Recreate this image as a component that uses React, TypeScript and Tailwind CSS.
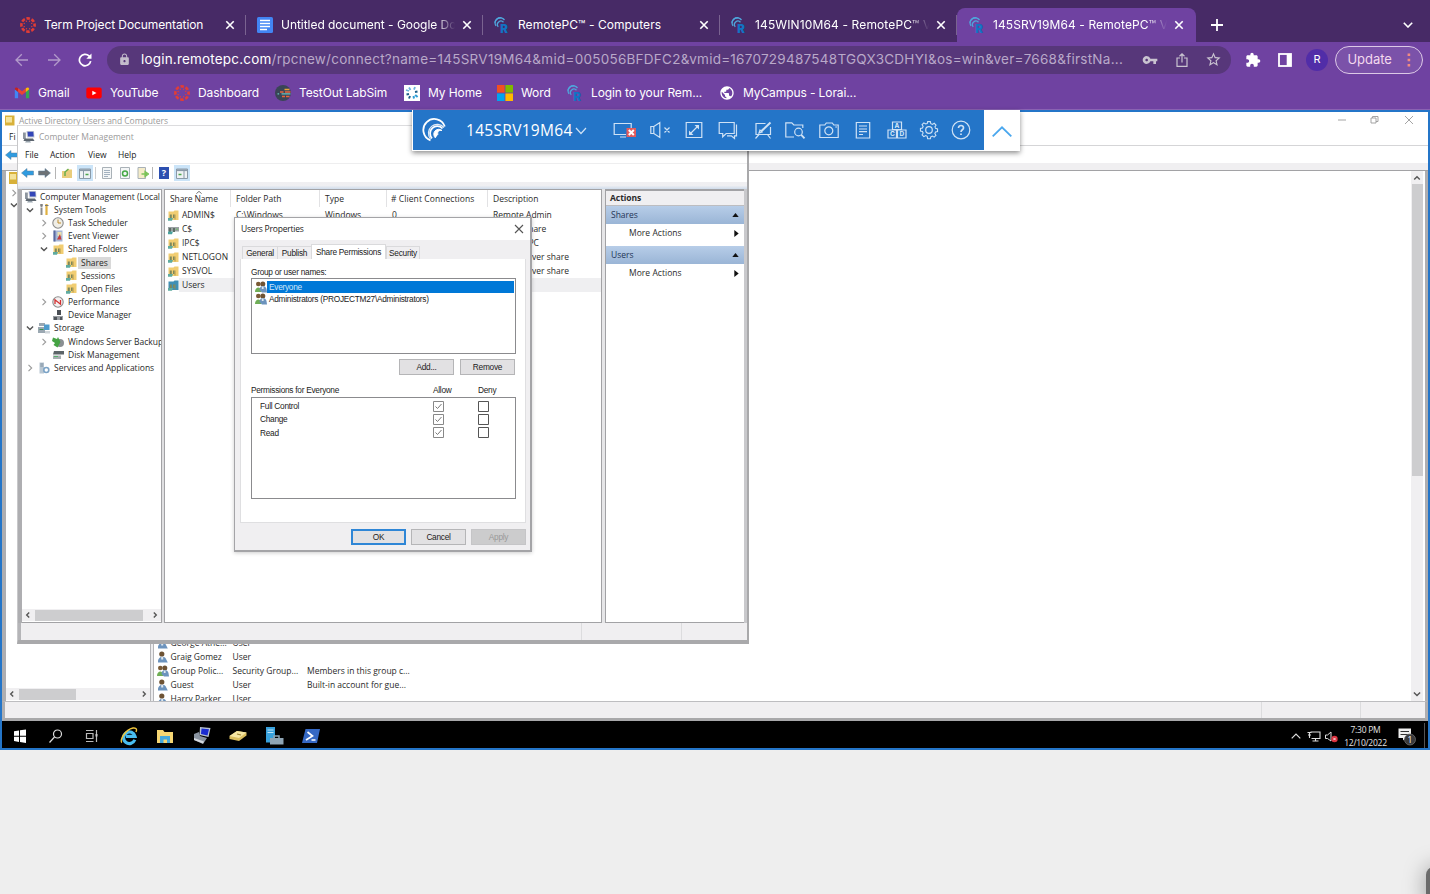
import React from 'react';
import { MdLock, MdVpnKey, MdStarBorder, MdExtension, MdPublic } from 'react-icons/md';

type P = { className?: string };

/* ---------- favicons ---------- */

const CanvasIcon = ({ className = '' }: P) => (
  <svg viewBox="0 0 16 16" className={`h-4 w-4 shrink-0 ${className}`}>
    <circle cx="8" cy="8" r="6.6" fill="none" stroke="#e23d35" strokeWidth="2.6" strokeDasharray="3.5 1.68" strokeDashoffset="1.75" />
    {[0, 45, 90, 135, 180, 225, 270, 315].map((a) => (
      <circle key={a} cx="8" cy="3.9" r="0.7" fill="#e23d35" transform={`rotate(${a + 22} 8 8)`} />
    ))}
  </svg>
);

const DocsIcon = () => (
  <svg viewBox="0 0 16 16" className="h-4 w-4 shrink-0">
    <rect width="16" height="16" rx="1.5" fill="#4285f4" />
    <path d="M3 3.4h10M3 6.4h10M3 9.4h10M3 12.4h7" stroke="#fff" strokeWidth="1.5" />
  </svg>
);

const RpcIcon = () => (
  <svg viewBox="0 0 16 16" className="h-4 w-4 shrink-0 overflow-visible">
    <g fill="none" stroke="#4fa6dc" strokeWidth="1.3">
      <path d="M2 9A5.200 5.200 0 0 1 10.500 3" />
      <path d="M4.300 9.800A3.400 3.400 0 0 1 9.500 5.300" />
      <path d="M.900 5.800A5.500 5.500 0 0 1 7.500.900" />
    </g>
    <text x="6.300" y="16" fontSize="11.500" fontWeight="900" fill="#1273c4" fontFamily="Inter, sans-serif">R</text>
  </svg>
);

const GmailIcon = () => (
  <svg viewBox="0 0 16 16" className="h-4 w-4 shrink-0">
    <path d="M.8 4.500v8.700h3.300V6.500z" fill="#4285f4" />
    <path d="M15.200 4.500v8.700h-3.300V6.500z" fill="#34a853" />
    <path d="M.8 4.300 4.100 7V3.200C2.500 2 .8 2.600.8 4.300" fill="#c5221f" />
    <path d="m4.100 3.200 3.900 3 3.900-3V7L8 10 4.100 7z" fill="#ea4335" />
    <path d="M15.200 4.300 11.900 7V3.200c1.600-1.200 3.300-.6 3.300 1.100" fill="#fbbc04" />
  </svg>
);

const YouTubeIcon = () => (
  <svg viewBox="0 0 16 16" className="h-4 w-4 shrink-0">
    <rect x=".3" y="2.600" width="15.400" height="10.800" rx="1.800" fill="#f00" />
    <path d="m6.300 5.700 4.200 2.300-4.200 2.300z" fill="#fff" />
  </svg>
);

const LabSimIcon = () => (
  <svg viewBox="0 0 16 16" className="h-4 w-4 shrink-0">
    <circle cx="8" cy="8" r="8" fill="#3a4556" />
    <path d="M9.500 4.500h5" stroke="#e8a33a" strokeWidth="1.500" />
    <path d="M5 6.900h3.500M10 6.900h5.500" stroke="#e8643c" strokeWidth="1.500" />
    <path d="M2.500 8.900h1.600M6.500 8.900h9" stroke="#67c3c0" strokeWidth="1.300" />
    <path d="M7 11.500h3M11 11.500h3.500" stroke="#e8643c" strokeWidth="1.500" />
  </svg>
);

const HomeFavIcon = () => (
  <svg viewBox="0 0 16 16" className="h-4 w-4 shrink-0">
    <rect width="16" height="16" fill="#fff" />
    <path d="M5 2.500 6.500 5M11 2l-1 2.600M2 5l3 1" stroke="#69b5dd" strokeWidth="1.800" />
    <path d="M13.500 6.500 11 7M2.500 9.500 5 9M5 13.500 6 11" stroke="#1d5f8a" strokeWidth="2" />
    <path d="m10 13.500-.5-2.500M13.600 12l-2.400-2" stroke="#2d9fd6" strokeWidth="2" />
  </svg>
);

const MsIcon = () => (
  <svg viewBox="0 0 16 16" className="h-4 w-4 shrink-0">
    <path d="M0 0h7.600v7.600H0z" fill="#f25022" />
    <path d="M8.400 0H16v7.600H8.400z" fill="#7fba00" />
    <path d="M0 8.400h7.600V16H0z" fill="#00a4ef" />
    <path d="M8.400 8.400H16V16H8.400z" fill="#ffb900" />
  </svg>
);

/* ---------- browser chrome ---------- */

const Cross = () => (
  <svg viewBox="0 0 10 10" className="h-2.5 w-2.5 shrink-0">
    <path d="m1.300 1.300 7.400 7.400M8.700 1.300 1.300 8.700" stroke="#fff" strokeWidth="1.600" />
  </svg>
);

const Tab = ({ icon, title, cls, active, fade }: { icon: React.ReactNode; title: string; cls: string; active?: boolean; fade?: boolean }) => (
  <div className={`flex h-[34px] items-center ${cls} ${active ? 'w-[239px] rounded-t-lg bg-[#6f42a1]' : 'w-[237px]'}`}>
    {icon}
    <span
      className={`ml-2 w-[174px] whitespace-nowrap text-[12px] text-white ${
        fade ? '[mask-image:linear-gradient(to_right,#000_89%,transparent)]' : ''
      }`}
    >
      {title}
    </span>
    <span className="ml-[7px] flex">
      <Cross />
    </span>
    {!active && <span className="ml-auto h-5 w-px bg-[#7a6390]" />}
  </div>
);

const Bookmark = ({ icon, label, w }: { icon: React.ReactNode; label: string; w: string }) => (
  <div className={`flex items-center gap-2 whitespace-nowrap ${w}`}>
    {icon}
    <span className="text-[12px] tracking-[-0.1px] text-white">{label}</span>
  </div>
);

const Browser = () => (
  <div className="font-['Inter',sans-serif]">
    <div className="flex h-[42px] items-end bg-[#472a66] pl-[9px]">
      <Tab icon={<CanvasIcon />} title="Term Project Documentation" cls="pl-[11px] tracking-[-0.1px]" />
      <Tab icon={<DocsIcon />} title="Untitled document - Google Do" cls="pl-[11px] tracking-[-0.04px]" fade />
      <Tab icon={<RpcIcon />} title="RemotePC™ - Computers" cls="pl-[11px] tracking-[0.07px]" />
      <Tab icon={<RpcIcon />} title="145WIN10M64 - RemotePC™ V" cls="pl-[11px] tracking-[0.13px]" fade />
      <Tab icon={<RpcIcon />} title="145SRV19M64 - RemotePC™ V" cls="pl-3 tracking-[0.1px]" active fade />
      <div className="ml-[15px] flex h-[34px] items-center">
        <svg viewBox="0 0 12 12" className="h-3 w-3">
          <path d="M6 0v12M0 6h12" stroke="#fff" strokeWidth="1.800" />
        </svg>
      </div>
      <div className="mr-[17px] ml-auto flex h-[34px] items-center">
        <svg viewBox="0 0 10 6" className="h-1.5 w-2.5">
          <path d="m.8.8 4.200 4.200L9.200.8" fill="none" stroke="#fff" strokeWidth="1.600" />
        </svg>
      </div>
    </div>
    <div className="h-[68px] border-b border-[#8a63b3] bg-[#6f42a1]">
      <div className="flex h-[35px] items-center pl-[15px]">
        <svg viewBox="0 0 14 14" className="h-3.5 w-3.5">
          <path d="M13 7H1M6.800 1.200 1 7l5.800 5.800" fill="none" stroke="#b29aca" strokeWidth="1.300" />
        </svg>
        <svg viewBox="0 0 14 14" className="ml-[18px] h-3.5 w-3.5">
          <path d="M1 7h12M7.200 1.200 13 7l-5.800 5.800" fill="none" stroke="#b29aca" strokeWidth="1.300" />
        </svg>
        <svg viewBox="0 0 14 14" className="ml-[17px] h-3.5 w-3.5">
          <path d="M12.700 8.200A5.700 5.700 0 1 1 11 2.900L12.500 4.400" fill="none" stroke="#fff" strokeWidth="1.700" />
          <path d="M13.500.6v5.200H8.300z" fill="#fff" />
        </svg>
        <div className="ml-[15px] flex h-7 w-[1124px] items-center rounded-full bg-[#57377a] pr-[9px] pl-[11px]">
          <MdLock className="h-[13px] w-[13px] text-[#c3bccb]" />
          <span className="ml-2.5 w-[985px] whitespace-nowrap text-[13.5px] tracking-[0.26px] text-[#b9a9c9]">
            <span className="tracking-[0.19px] text-white">login.remotepc.com</span>
            /rpcnew/connect?name=145SRV19M64&amp;mid=005056BFDFC2&amp;vmid=1670729487548TGQX3CDHYI&amp;os=win&amp;ver=7668&amp;firstNa...
          </span>
          <MdVpnKey className="ml-auto h-4 w-4 text-[#c9c3d0]" />
          <svg viewBox="0 0 12 14" className="ml-[18px] h-3.5 w-3">
            <path d="M4 5H1v8.300h10V5H8M6 9.500V1M3.500 3.300 6 .9l2.500 2.400" fill="none" stroke="#c9c3d0" strokeWidth="1.200" />
          </svg>
          <MdStarBorder className="ml-[17px] h-[17px] w-[17px] text-[#c9c3d0]" />
        </div>
        <MdExtension className="ml-[14px] h-4 w-4 text-white" />
        <svg viewBox="0 0 14 14" className="ml-[17px] h-3.5 w-3.5">
          <rect x="1" y="1" width="12" height="12" fill="none" stroke="#fff" strokeWidth="1.800" />
          <path d="M8.700 1H13v12H8.700z" fill="#fff" />
        </svg>
        <span className="ml-3.5 flex h-[22px] w-[22px] items-center justify-center rounded-full bg-[#512da8] text-[11px] text-white">R</span>
        <div className="ml-[7px] flex h-7 w-[88px] items-center rounded-full border-[1.5px] border-[#dcc9e6] bg-[#7b52a9] pl-[11.5px]">
          <span className="w-[45px] text-[13px] tracking-[-0.05px] text-[#f3d9ee]">Update</span>
          <svg viewBox="0 0 4 14" className="ml-[14px] h-3.5 w-1">
            <path d="M.6.600h2.600v2.400H.6zM.6 5.800h2.600v2.400H.6zM.6 11h2.600v2.400H.6z" fill="#f28b82" />
          </svg>
        </div>
      </div>
      <div className="flex h-[32px] items-center pl-3.5">
        <Bookmark icon={<GmailIcon />} label="Gmail" w="w-[72px]" />
        <Bookmark icon={<YouTubeIcon />} label="YouTube" w="w-[88px]" />
        <Bookmark icon={<CanvasIcon />} label="Dashboard" w="w-[101px]" />
        <Bookmark icon={<LabSimIcon />} label="TestOut LabSim" w="w-[129px]" />
        <Bookmark icon={<HomeFavIcon />} label="My Home" w="w-[93px]" />
        <Bookmark icon={<MsIcon />} label="Word" w="w-[70px]" />
        <Bookmark icon={<RpcIcon />} label="Login to your Rem..." w="w-[152px]" />
        <Bookmark icon={<MdPublic className="h-4 w-4 shrink-0 rounded-full text-white" />} label="MyCampus - Lorai..." w="w-[150px]" />
      </div>
    </div>
  </div>
);

/* ---------- RemotePC viewer toolbar ---------- */

const Tool = ({ children, ml }: { children: React.ReactNode; ml: string }) => (
  <svg viewBox="0 0 20 20" className={`h-5 w-5 shrink-0 overflow-visible ${ml}`} fill="none" stroke="#cfe2f5" strokeWidth="1.200">
    {children}
  </svg>
);

const ViewerBar = () => (
  <div className="absolute top-[110px] left-[412px] flex h-[41px] w-[608px] border-b border-l border-white bg-white shadow-[0_2px_5px_rgba(0,0,0,0.45)]">
    <div className="flex w-[571px] items-center bg-[#2475c8] pl-[9px]">
      <svg viewBox="0 0 24 24" className="h-6 w-6 shrink-0" fill="none" stroke="#fff">
        <path d="M8.500 22.300A11 11 0 1 1 22.800 8.500" strokeWidth="1.800" />
        <path d="M8.500 20.800A8.800 8.800 0 1 1 22 9.500" strokeWidth="1.200" opacity=".85" />
        <path d="M10 20.300A6.500 6.500 0 1 1 20.500 10.500" strokeWidth="1.800" />
        <path d="M13.500 20a4.800 4.800 0 1 1 6.500-7.500c-3-.5-5 1-4 4" fill="#fff" strokeWidth="1" />
      </svg>
      <span className="ml-[20px] w-[108px] pt-0.5 font-['Open_Sans',sans-serif] text-[15.5px] leading-none tracking-[0.3px] text-white">145SRV19M64</span>
      <svg viewBox="0 0 12 8" className="ml-px mt-0.5 h-2 w-3 shrink-0">
        <path d="m1 1 5 5.500L11 1" fill="none" stroke="#cfe2f5" strokeWidth="1.200" />
      </svg>
      <Tool ml="ml-[27px]">
        <path d="M12 14.500H.2V3.500h17v5M6 17h6" />
        <path d="M12.500 8h9.500v9h-9.500z" fill="#e25a5c" stroke="none" />
        <path d="m14.800 10 5 5m0-5-5 5" stroke="#fff" strokeWidth="2" />
      </Tool>
      <Tool ml="ml-4">
        <path d="M.8 6.500h3v7h-3zM3.800 6.500l6-4v15l-6-4M14.500 7.500l5 5m0-5-5 5" />
      </Tool>
      <Tool ml="ml-3.5">
        <path d="M2.200 2.500h15.600v15H2.200zM5.500 14.500l9-9" />
        <path d="M10.500 5h4.500v4.500zM5 10.500V15h4.500z" fill="#cfe2f5" stroke="none" />
      </Tool>
      <Tool ml="ml-3.5">
        <path d="M1.200 2.500h15v11h-8l-3.500 3.300v-3.300H1.200z" />
        <path d="M18.500 4.500v11.300h-2v2.700l-3.200-2.700H9" />
      </Tool>
      <Tool ml="ml-[15px]">
        <path d="M12.500 3.500H3v11h14.500V7M6 14.500l-3.500 4M14.500 14.500l3 4" />
        <path d="m8 11.500 9.500-9" strokeWidth="2" />
        <path d="m6 13 1-3 2 2z" />
      </Tool>
      <Tool ml="ml-3">
        <path d="M9 17H.8V2.800h6l2 2.200h9v3" />
        <circle cx="13.500" cy="12" r="3.800" />
        <path d="m16.300 14.800 3.200 3.500" strokeWidth="1.800" />
      </Tool>
      <Tool ml="ml-3.5">
        <path d="M.8 5h5l1.500-2h6l1.500 2h4.400v12.500H.8z" />
        <circle cx="9.800" cy="10.800" r="4" />
        <path d="M16.500 7h1.200" strokeWidth="1.600" />
      </Tool>
      <Tool ml="ml-3.5">
        <path d="M3.300 2.500h13.400v15.500H3.300zM6 6h8M6 9h8M6 11.700h8M6 14.500h4" />
      </Tool>
      <Tool ml="ml-3.5">
        <path d="M5.500 2h9v7.500h-9zM1 10h8.500v8H1zM10.500 10H19v8h-8.500z" />
        <g fill="#dcebf8" stroke="none" fontFamily="Inter, sans-serif" fontSize="6.500" fontWeight="700" textAnchor="middle">
          <text x="10" y="8.200">A</text>
          <text x="5.300" y="16.400">C</text>
          <text x="14.800" y="16.400">D</text>
        </g>
      </Tool>
      <Tool ml="ml-3">
        <circle cx="10" cy="10" r="3.300" />
        <path d="M8.500 1.500h3l.5 2.200 1.800.8 2-1.200 2 2-1.200 2 .7 1.700 2.200.5v3l-2.200.5-.8 1.700 1.200 2-2 2-2-1.200-1.700.8-.5 2.200h-3L8 17.800l-1.700-.8-2 1.200-2-2 1.200-2-.8-1.700-2.200-.5V9l2.200-.5.8-1.700-1.200-2 2-2 2 1.200L8 3.700z" transform="translate(1 .3) scale(.9)" />
      </Tool>
      <Tool ml="ml-3">
        <circle cx="10" cy="10" r="8.800" />
        <path d="M7.500 8c0-3.400 5.200-3.200 5 0-.1 1.700-2.500 1.900-2.500 4M10 13.500v1.600" strokeWidth="1.700" />
      </Tool>
    </div>
    <div className="flex flex-1 items-center justify-center">
      <svg viewBox="0 0 20 11" className="mt-[3px] h-[11px] w-5">
        <path d="m.7 10.300 9.300-9 9.300 9" fill="none" stroke="#4aa7ee" strokeWidth="1.800" />
      </svg>
    </div>
  </div>
);

/* ---------- small icons of the remote session ---------- */

const Chev = ({ dir, className = '' }: { dir: 'r' | 'd' | 'l' | 'u'; className?: string }) => (
  <svg viewBox="0 0 8 8" className={`h-2 w-2 shrink-0 ${className}`}>
    <path
      d={{ r: 'm2.500.800 3.200 3.200-3.200 3.200', l: 'M5.200 1.500 2.700 4l2.500 2.500', d: 'm.900 2.500 3.100 3.100 3.100-3.100', u: 'M1.200 5.500 4 2.700l2.800 2.800' }[dir]}
      fill="none"
      stroke={dir === 'r' ? '#9a9a9a' : '#555'}
      strokeWidth={dir === 'r' ? 1.1 : 1.4}
    />
  </svg>
);

const Folder = ({ tint = '#f1cd72' }: { tint?: string }) => (
  <svg viewBox="0 0 11 11" className="h-[11px] w-[11px] shrink-0">
    <path d="M.5 1.500h5l1-1h4v9.500H.5z" fill={tint} />
    <path d="M1.800 4.500h2V8h-2zM5 4.500h1.500V8H5z" fill="#7d875c" />
    <path d="M0 8h5l-1 2.700H0z" fill="#5eaba0" />
    <path d="M7 4.500v5" stroke="#a08a45" strokeWidth=".8" />
  </svg>
);

const Drive = () => (
  <svg viewBox="0 0 11 11" className="h-[11px] w-[11px] shrink-0">
    <path d="M0 3h11v4.500H0z" fill="#9ba1a3" />
    <path d="M1 4h2v4H1zM5 4h2v4H5z" fill="#5d6f65" />
    <path d="M0 7.500h5l-1 2.700H0z" fill="#4ba3a0" />
    <path d="M8 5.200h2" stroke="#6ec26a" />
  </svg>
);

const Computer = () => (
  <svg viewBox="0 0 12 12" className="h-3 w-3 shrink-0">
    <path d="M3.500 0H11l.5 6.500H4z" fill="#c7ccd4" />
    <path d="M4.500.800h5.800l.4 4.700H5z" fill="#3346b8" />
    <path d="M0 1.500h2.800V8H0z" fill="#8d959e" />
    <path d="M1.500 7.500h8.500L11.500 10H.5z" fill="#5d6670" />
    <path d="M3 10h4l1 1.500H2z" fill="#9aa5ae" />
  </svg>
);

const Tools = () => (
  <svg viewBox="0 0 11 11" className="h-[11px] w-[11px] shrink-0">
    <path d="M2.500 0v3.500M2.500 4v7" stroke="#8b8b8b" strokeWidth="2" />
    <path d="M7.500 0v11" stroke="#e0b040" strokeWidth="2.200" />
    <path d="M6 1.500h3.500M1 1h3" stroke="#777" />
  </svg>
);

const Clock = () => (
  <svg viewBox="0 0 12 12" className="h-3 w-3 shrink-0">
    <circle cx="6" cy="6" r="5.200" fill="#f0eee6" stroke="#8c8c8c" strokeWidth="1.100" />
    <path d="M6 2.500V6H9" fill="none" stroke="#c08a28" />
  </svg>
);

const EventLog = () => (
  <svg viewBox="0 0 12 12" className="h-3 w-3 shrink-0">
    <path d="M1.500.500h9v11h-9z" fill="#a7b7d6" />
    <path d="M1.500.500h2v11h-2z" fill="#5a6aa0" />
    <path d="M5.500 2h4v4h-4z" fill="#e8e0b0" />
    <path d="m5 9.500 3-5.500 1.500 5.500z" fill="#c33b3b" />
  </svg>
);

const Perf = () => (
  <svg viewBox="0 0 12 12" className="h-3 w-3 shrink-0">
    <circle cx="6" cy="6" r="5.200" fill="#f4efef" stroke="#8c8c8c" strokeWidth="1.100" />
    <path d="M3 8V3.800L8.500 8.200V4" fill="none" stroke="#d22f2f" strokeWidth="1.300" />
  </svg>
);

const Device = () => (
  <svg viewBox="0 0 12 12" className="h-3 w-3 shrink-0">
    <path d="M5 1h4v5H5z" fill="#4a4f55" />
    <path d="M1 7h10v4H1z" fill="#9a9fa4" />
    <path d="M2 8h3v3H2zM8 8h2v3H8z" fill="#50565c" />
  </svg>
);

const Storage = () => (
  <svg viewBox="0 0 12 12" className="h-3 w-3 shrink-0">
    <path d="M1 1h6v3H1zM0 5h7v6H0z" fill="#9ba8b2" />
    <path d="M6 2.500h5.500V8H6z" fill="#4f9ccc" />
    <path d="M1.500 7.500h4" stroke="#3a8f52" />
    <path d="M7 9h5v2.500H7z" fill="#cfd5da" />
  </svg>
);

const Backup = () => (
  <svg viewBox="0 0 12 12" className="h-3 w-3 shrink-0">
    <circle cx="8" cy="7" r="4" fill="#8a8f93" />
    <path d="M1 1.500 5 3l1-2 2.500 5-3 5.500L1.500 9 3 7 0 5z" fill="#45a343" />
  </svg>
);

const Disk = () => (
  <svg viewBox="0 0 12 12" className="h-3 w-3 shrink-0">
    <path d="M2 2h10v3.500H1z" fill="#5c6468" />
    <path d="M1 6.500h8V10H1z" fill="#a7aeb2" />
    <path d="M2 7.500h4" stroke="#55b06a" />
  </svg>
);

const Services = () => (
  <svg viewBox="0 0 12 12" className="h-3 w-3 shrink-0">
    <path d="M1.500.500h4.500v11H1.500z" fill="#b9c7d3" />
    <path d="M2.300 2h3M2.300 4h3" stroke="#7a8c9c" />
    <circle cx="8.300" cy="8" r="2.500" fill="none" stroke="#7ba3c6" strokeWidth="1.600" />
  </svg>
);

const Person = ({ group }: { group?: boolean }) => (
  <svg viewBox="0 0 12 12" className="h-3 w-3 shrink-0">
    {group ? (
      <>
        <circle cx="3.300" cy="3" r="2.300" fill="#7a5a35" />
        <path d="M0 11c0-6 6.500-6 6.500 0z" fill="#6fae56" />
        <circle cx="7.800" cy="3" r="2.500" fill="#6e5334" />
        <path d="M4.500 9c0-5 6-5 7-1l.5 3.500H7z" fill="#6c93bd" />
        <path d="M6.800 5.500h1.800V8H6.800z" fill="#dfe8f0" />
      </>
    ) : (
      <>
        <circle cx="4.800" cy="3" r="2.600" fill="#6e5334" />
        <path d="M1 11c0-6.500 7-6 8-3l1.800 3.500H1z" fill="#6c93bd" />
        <path d="M4.200 6h2v2.500h-2z" fill="#dfe8f0" />
      </>
    )}
  </svg>
);

const ArrowIcon = ({ flip, fill }: { flip?: boolean; fill: string }) => (
  <svg viewBox="0 0 13 10" className={`h-2.5 w-[13px] shrink-0 ${flip ? '-scale-x-100' : ''}`}>
    <path d="M.5 5 6 .500V3h6.500v4H6v2.500z" fill={fill} stroke="#5a7f98" strokeWidth=".5" />
  </svg>
);

const PanelIcon = ({ right }: { right?: boolean }) => (
  <svg viewBox="0 0 12 11" className="h-[11px] w-3 shrink-0">
    <path d="M.5 1h11v9.500H.5z" fill="#eef2f4" stroke="#8a9aa8" />
    <path d="M.5 2.200h11" stroke="#8a9aa8" strokeWidth="1.800" />
    <path d={right ? 'M8 3v7' : 'M4.500 3v7'} stroke="#8a9aa8" />
    <path d={right ? 'M2.500 6.500h3' : 'M6.500 6.500h3'} stroke="#4ca64c" strokeWidth="1.500" />
  </svg>
);

const PageIcon = ({ kind }: { kind: 'list' | 'refresh' | 'export' | 'up' }) => (
  <svg viewBox="0 0 12 12" className="h-3 w-3 shrink-0">
    {kind === 'up' ? (
      <>
        <path d="M1 4h4l1-1.500h5V11H1z" fill="#e9cd7c" />
        <path d="M4 9V5l3.500-3" fill="none" stroke="#6aae4c" strokeWidth="1.500" />
      </>
    ) : (
      <>
        <path d={kind === 'export' ? 'M1 .500h7.500v11H1z' : 'M1.500.500h9v11h-9z'} fill={kind === 'export' ? '#f5ecc9' : '#f4f6f7'} stroke="#a9b1b7" />
        {kind === 'list' && <path d="M3 3.500h6M3 5.500h6M3 7.500h6M3 9.500h4" stroke="#8ea0b0" strokeWidth=".8" />}
        {kind === 'refresh' && <circle cx="6" cy="6.500" r="2.500" fill="none" stroke="#46a846" strokeWidth="1.500" />}
        {kind === 'export' && <path d="M4.500 7H9M8 4.500 11.500 7 8 9.500z" fill="#7cc35a" stroke="#7cc35a" strokeWidth="1.300" />}
      </>
    )}
  </svg>
);

const HScroll = ({ thumb }: { thumb: string }) => (
  <div className="mb-px flex h-3 items-center bg-[#f0eff1] px-0.5">
    <Chev dir="l" />
    <div className={`ml-[3px] h-[11px] bg-[#cdcdcf] ${thumb}`} />
    <svg viewBox="0 0 8 8" className="ml-auto h-2 w-2">
      <path d="M2.800 1.500 5.300 4 2.800 6.500" fill="none" stroke="#555" strokeWidth="1.400" />
    </svg>
  </div>
);

/* ---------- Active Directory window ---------- */

const adRows: [boolean, string, string, string][] = [
  [false, 'George Athe...', 'User', ''],
  [false, 'Graig Gomez', 'User', ''],
  [true, 'Group Polic...', 'Security Group...', 'Members in this group c...'],
  [false, 'Guest', 'User', 'Built-in account for gue...'],
  [false, 'Harry Parker', 'User', ''],
];

const DirectoryWindow = () => (
  <div className="flex h-[609px] flex-col bg-white">
    <div className="flex h-[18px] items-center pl-[3px]">
      <svg viewBox="0 0 10 11" className="mb-0.5 h-[11px] w-2.5">
        <path d="M0 .500h9.500v10H0z" fill="#d8b13a" />
        <path d="M1 2h6v5.500H1z" fill="#f3e29b" />
      </svg>
      <span className="ml-1 tracking-[-0.05px] text-[#9b9b9b]">Active Directory Users and Computers</span>
      <svg viewBox="0 0 80 10" className="mr-[14px] mb-[3px] ml-auto h-2.5 w-20" fill="none" stroke="#9a9a9a" strokeWidth=".9">
        <path d="M4 5h8M37 3h5v5h-5zM38.500 3V1.500H44V6.500h-2M71 1l8 8m0-8-8 8" />
      </svg>
    </div>
    <div className="flex h-4 items-center border-b border-[#d5d5d7] pb-0.5 pl-[7px] text-[#222]">Fi</div>
    <div className="flex h-[17px] items-center pl-[3px]">
      <ArrowIcon fill="#2f9be0" />
    </div>
    <div className="h-2 border-b border-[#a2a2a5] bg-[#f0eff1]" />
    <div className="flex h-[530px] border-r-[3px] border-l-4 border-[#aeaeb1]">
      <div className="flex w-[144px] flex-col justify-between">
        <div className="flex flex-col pt-px pl-px">
          <svg viewBox="0 0 10 12" className="ml-0.5 h-3 w-2.5">
            <path d="M0 0h9.500v12H0z" fill="#d8b13a" />
            <path d="M1 2h6v5.500H1z" fill="#f3e29b" />
          </svg>
          <Chev dir="r" className="mt-[5px] ml-[3px]" />
          <Chev dir="d" className="mt-[4px] ml-[3px]" />
        </div>
        <HScroll thumb="w-[57px]" />
      </div>
      <div className="w-1 border-x border-[#b5b5b8] bg-[#ececee]" />
      <div className="flex h-full flex-1 flex-col justify-end overflow-hidden">
        <div className="mb-[-5px]">
          {adRows.map(([group, name, type, desc]) => (
            <div key={name} className="flex h-3.5 items-center pl-[3px]">
              <Person group={group} />
              <span className="ml-[1.5px] w-[62px]">{name}</span>
              <span className="w-[74.5px]">{type}</span>
              <span>{desc}</span>
            </div>
          ))}
        </div>
      </div>
      <div className="mr-0.5 flex w-3 flex-col items-center bg-[#f0eff1] pt-[3px] pb-[3px]">
        <Chev dir="u" />
        <div className="mt-[2px] h-[292px] w-[11px] bg-[#cdcdcf]" />
        <Chev dir="d" className="mt-auto" />
      </div>
    </div>
    <div className="flex h-[20px] justify-end border-x-[3px] border-t border-b-[3px] border-t-[#bdbdc0] border-r-[#aeaeb1] border-b-[#a8a8aa] border-l-[#aeaeb1] bg-[#f0eff1]">
      <div className="w-[99px] border-l border-[#dcdcde]" />
      <div className="w-[65px] border-l border-[#dcdcde]" />
    </div>
  </div>
);

/* ---------- Computer Management window ---------- */

type Node = { lvl: 0 | 1 | 2 | 3; icon: React.ReactNode; label: string; chev?: 'r' | 'd'; sel?: boolean };
const tree: Node[] = [
  { lvl: 0, icon: <Computer />, label: 'Computer Management (Local' },
  { lvl: 1, icon: <Tools />, label: 'System Tools', chev: 'd' },
  { lvl: 2, icon: <Clock />, label: 'Task Scheduler', chev: 'r' },
  { lvl: 2, icon: <EventLog />, label: 'Event Viewer', chev: 'r' },
  { lvl: 2, icon: <Folder />, label: 'Shared Folders', chev: 'd' },
  { lvl: 3, icon: <Folder />, label: 'Shares', sel: true },
  { lvl: 3, icon: <Folder />, label: 'Sessions' },
  { lvl: 3, icon: <Folder />, label: 'Open Files' },
  { lvl: 2, icon: <Perf />, label: 'Performance', chev: 'r' },
  { lvl: 2, icon: <Device />, label: 'Device Manager' },
  { lvl: 1, icon: <Storage />, label: 'Storage', chev: 'd' },
  { lvl: 2, icon: <Backup />, label: 'Windows Server Backup', chev: 'r' },
  { lvl: 2, icon: <Disk />, label: 'Disk Management' },
  { lvl: 1, icon: <Services />, label: 'Services and Applications', chev: 'r' },
];
const indent = { 0: 'pl-0.5', 1: 'pl-1', 2: 'pl-[18px]', 3: 'pl-[31px]' };

const TreeRow = ({ n }: { n: Node }) => (
  <div className={`flex h-[13.2px] items-center whitespace-nowrap ${indent[n.lvl]}`}>
    {n.lvl > 0 && (n.chev ? <Chev dir={n.chev} /> : <span className="w-2" />)}
    <span className={`flex w-3 shrink-0 justify-center ${n.lvl === 0 ? 'ml-px' : 'ml-1'}`}>{n.icon}</span>
    <span className={n.sel ? 'ml-px bg-[#d9d9d9] px-[3px]' : n.lvl === 0 ? 'ml-[3px]' : 'ml-1'}>{n.label}</span>
  </div>
);

const shares: [React.ReactNode, string, string, string, string, string][] = [
  [<Folder />, 'ADMIN$', 'C:\\Windows', 'Windows', '0', 'Remote Admin'],
  [<Drive />, 'C$', '', '', '', 'Default share'],
  [<Folder />, 'IPC$', '', '', '', 'Remote IPC'],
  [<Folder />, 'NETLOGON', '', '', '', 'Logon server share'],
  [<Folder />, 'SYSVOL', '', '', '', 'Logon server share'],
  [<Folder tint="#3f8fb5" />, 'Users', '', '', '', ''],
];

const ActionGroup = ({ title }: { title: string }) => (
  <>
    <div className="flex h-[18px] items-center bg-linear-to-b from-[#b7cde8] to-[#9ab5d6] pr-[5px] pl-[5px] text-[#1f3557]">
      {title}
      <svg viewBox="0 0 8 5" className="ml-auto h-1 w-[7px]">
        <path d="m0 5 4-5 4 5z" fill="#111" />
      </svg>
    </div>
    <div className="mb-1 flex h-[18px] items-center pr-[5px] pl-[23px] tracking-[0.04px]">
      More Actions
      <svg viewBox="0 0 5 8" className="ml-auto h-[7px] w-[5px]">
        <path d="m0 0 5 4-5 4z" fill="#111" />
      </svg>
    </div>
  </>
);

const ManagementWindow = () => (
  <div className="absolute top-[125px] left-[17px] flex h-[519px] w-[732px] flex-col border border-t-[#dcdcde] border-r-2 border-b-4 border-[#a9a9ab] border-l-[#c8c8ca] bg-white">
    <div className="flex h-[21px] items-center pl-[5px] text-[#9b9b9b]">
      <Computer />
      <span className="ml-1">Computer Management</span>
    </div>
    <div className="flex h-[17px] items-center border-b border-[#eeeeef] pl-[7px] text-[#222]">
      <span className="w-[25px]">File</span>
      <span className="w-[38px]">Action</span>
      <span className="w-[30px]">View</span>
      <span>Help</span>
    </div>
    <div className="flex h-[18px] items-center pl-[3px]">
      <ArrowIcon fill="#2f9be0" />
      <span className="ml-1 flex">
        <ArrowIcon fill="#6d7276" flip />
      </span>
      <span className="ml-[4px] h-3 w-px bg-[#b5b5b5]" />
      <span className="ml-[5px] flex">
        <PageIcon kind="up" />
      </span>
      <span className="ml-1 flex h-4 w-4 items-center justify-center bg-[#cbe4f8]">
        <PanelIcon />
      </span>
      <span className="ml-0.5 h-3 w-px bg-[#cfcfcf]" />
      <span className="ml-[5px] flex gap-[6px]">
        <PageIcon kind="list" />
        <PageIcon kind="refresh" />
        <PageIcon kind="export" />
      </span>
      <span className="ml-[3px] h-3 w-px bg-[#b5b5b5]" />
      <span className="ml-1.5 flex h-3 w-2.5 items-center justify-center bg-[#2c4fb0] text-[9px] font-bold text-white">?</span>
      <span className="ml-[5px] flex h-4 w-4 items-center justify-center bg-[#cbe4f8]">
        <PanelIcon right />
      </span>
    </div>
    <div className="h-[7px] bg-linear-to-b from-[#f0eff1] via-[#efeff2] to-[#cfdceb]" />
    <div className="flex h-[434px] border-l-4 border-[#aeaeb1]">
      <div className="flex w-[139px] flex-col justify-between overflow-hidden border-t border-b border-[#a2a2a5]">
        <div>
          {tree.map((n) => (
            <TreeRow key={n.label} n={n} />
          ))}
        </div>
        <HScroll thumb="w-[108px]" />
      </div>
      <div className="w-1 border-x border-[#a2a2a5] bg-[#dfdfe1]" />
      <div className="w-[436px] border-t border-b border-[#a2a2a5]">
        <div className="flex h-[18px] items-center pb-px">
          <div className="flex h-full w-[66px] items-center border-r border-[#e2e2e4] pl-[5px] tracking-[-0.1px]">
            Share Name
            <svg viewBox="0 0 8 4" className="mb-[13px] -ml-[22px] h-[3px] w-1.5">
              <path d="m.5 3.500 3.500-3 3.500 3" fill="none" stroke="#666" strokeWidth="1.200" />
            </svg>
          </div>
          <div className="flex h-full w-[89px] items-center border-r border-[#e2e2e4] pl-[5px]">Folder Path</div>
          <div className="flex h-full w-[67px] items-center border-r border-[#e2e2e4] pl-[5px]">Type</div>
          <div className="flex h-full w-[101px] items-center border-r border-[#e2e2e4] pl-1 tracking-[0.08px]"># Client Connections</div>
          <div className="pl-[5px]">Description</div>
        </div>
        <div>
          {shares.map(([icon, name, path, type, n, desc]) => (
            <div key={name} className="flex h-3.5 items-center pl-[3px]">
              {icon}
              <div className={`flex h-full flex-1 items-center pl-[3px] ${name === 'Users' ? 'bg-[#efeff1]' : ''}`}>
                <span className="w-[54px]">{name}</span>
                <span className="w-[89px]">{path}</span>
                <span className="w-[67px]">{type}</span>
                <span className="w-[101px]">{n}</span>
                <span>{desc}</span>
              </div>
            </div>
          ))}
        </div>
      </div>
      <div className="w-[5px] border-x border-[#a2a2a5] bg-[#e6e6e8]" />
      <div className="w-[138px] border-t-2 border-b border-[#a2a2a5]">
        <div className="flex h-[15px] items-center border-b border-[#bdbdc0] bg-[#f0eff1] pl-1 font-bold tracking-[-0.05px]">Actions</div>
        <ActionGroup title="Shares" />
        <ActionGroup title="Users" />
      </div>
      <div className="flex-1 bg-[#c9c9cc]" />
    </div>
    <div className="flex flex-1 justify-end border-l-[3px] border-[#b5b5b8] bg-[#f0eff1]">
      <div className="w-[100px] border-l border-[#dcdcde]" />
      <div className="w-[66px] border-l border-[#dcdcde]" />
    </div>
  </div>
);

/* ---------- Users Properties dialog ---------- */

const Btn = ({ label, cls }: { label: string; cls: string }) => (
  <div className={`flex h-4 items-center justify-center ${cls}`}>{label}</div>
);

const Box = ({ checked }: { checked?: boolean }) => (
  <svg viewBox="0 0 11 11" className="h-[11px] w-[11px]" fill="none">
    <path d="M.5.500h10v10H.5z" fill="#fff" stroke={checked ? '#888' : '#555'} />
    {checked && <path d="m2.500 5.500 2 2 4-4.500" stroke="#777" />}
  </svg>
);

const PropertiesDialog = () => (
  <div className="absolute top-[217px] left-[234px] flex h-[335px] w-[298px] flex-col border border-r-2 border-b-2 border-[#a4a4a7] bg-[#f0eff1] text-[8.3px] text-[#222] shadow-[0_1px_4px_rgba(0,0,0,0.2)] font-['Liberation_Sans',sans-serif] tracking-[-0.27px]">
    <div className="flex h-[22px] items-center justify-between bg-white pr-1.5 pl-1.5 font-['Open_Sans',sans-serif] text-[8.5px] tracking-[-0.2px]">
      Users Properties
      <svg viewBox="0 0 10 10" className="h-2.5 w-2.5">
        <path d="m1 1 8 8m0-8L1 9" stroke="#555" strokeWidth="1.100" />
      </svg>
    </div>
    <div className="flex h-[19px] items-end pt-1 pl-[7px]">
      <div className="flex h-[13px] w-[36px] items-center justify-center border border-b-0 border-[#dadadc]">General</div>
      <div className="flex h-[13px] w-[33px] items-center justify-center border-t border-[#dadadc]">Publish</div>
      <div className="flex h-[15px] w-[75px] items-center justify-center border border-b-0 border-[#dadadc] bg-white">Share Permissions</div>
      <div className="flex h-[13px] w-[34px] items-center justify-center border border-b-0 border-[#dadadc]">Security</div>
    </div>
    <div className="mr-[4px] ml-[5px] flex h-[264px] flex-col border border-t-0 border-[#dfdfe1] bg-white pl-[10px]">
      <div className="flex h-[19px] items-center pt-[6px]">Group or user names:</div>
      <div className="h-[76px] w-[265px] border border-[#8b8b8e] pt-px pr-px pl-[3px]">
        <div className="flex h-[13px] items-center">
          <Person group />
          <span className="flex h-3 flex-1 items-center bg-[#0078d7] pl-0.5 text-[#cfe6fa]">Everyone</span>
        </div>
        <div className="flex h-3 items-center">
          <Person group />
          <span className="pl-0.5">Administrators (PROJECTM27\Administrators)</span>
        </div>
      </div>
      <div className="mt-[5px] flex w-[264px] justify-end gap-1.5">
        <Btn label="Add..." cls="w-[55px] border border-[#b5b5b7] bg-[#e2e1e3]" />
        <Btn label="Remove" cls="w-[55px] border border-[#b5b5b7] bg-[#e2e1e3]" />
      </div>
      <div className="mt-[8px] flex h-[14px] items-center">
        <span className="w-[182px]">Permissions for Everyone</span>
        <span className="w-[45px]">Allow</span>
        <span>Deny</span>
      </div>
      <div className="h-[102px] w-[265px] border border-[#8b8b8e] pt-[1.5px] pl-2">
        {['Full Control', 'Change', 'Read'].map((p) => (
          <div key={p} className="flex h-[13.3px] items-center">
            <span className="w-[173px]">{p}</span>
            <Box checked />
            <span className="w-[34px]" />
            <Box />
          </div>
        ))}
      </div>
    </div>
    <div className="flex flex-1 items-center justify-end gap-[5px] pr-1">
      <Btn label="OK" cls="w-[55px] border-2 border-[#2f86d6] bg-[#e2e1e3]" />
      <Btn label="Cancel" cls="w-[55px] border border-[#b5b5b7] bg-[#e2e1e3]" />
      <Btn label="Apply" cls="w-[55px] border border-[#c5c5c7] bg-[#cccccd] text-[#999]" />
    </div>
  </div>
);

/* ---------- taskbar ---------- */

const Task = ({ children }: { children: React.ReactNode }) => (
  <svg viewBox="0 0 20 20" className="h-5 w-5 shrink-0" fill="none">
    {children}
  </svg>
);

const Taskbar = () => (
  <div className="flex h-[27px] items-center bg-black pt-0.5 pl-[7px] font-['Open_Sans',sans-serif]">
    <div className="flex items-center gap-[16.5px]">
      <Task>
        <path d="M5 5.300 10 4.500v5.200H5zM11 4.300 17 3.500v6.200h-6zM5 10.700h5v5.200L5 15.100zM11 10.700h6v6.200l-6-.8z" fill="#fff" />
      </Task>
      <Task>
        <circle cx="11.500" cy="8" r="4" stroke="#ddd" strokeWidth="1.200" />
        <path d="m8.500 11-5 5.500" stroke="#ddd" strokeWidth="1.200" />
      </Task>
      <Task>
        <path d="M4.500 7.500h6.500v5H4.500zM4 4.500h7.500M4 15.500h7.500M14.500 4v12" stroke="#bbb" strokeWidth="1.200" />
        <path d="M13.500 8h2v2.500h-2z" fill="#ccc" />
      </Task>
      <Task>
        <path d="M15.800 13.800A5.800 5.800 0 1 1 16 10.300H7" stroke="#49bdf0" strokeWidth="3.200" />
        <path d="M3 16.500C0 15 6 3.500 14 2c4-.500 4 2 3 4" stroke="#f0c53c" strokeWidth="1.400" />
      </Task>
      <Task>
        <path d="M2 4h6l1.500 2H18v11H2z" fill="#f6d673" />
        <path d="M5 10h10v7h-3v-3.500H8.500V17H5z" fill="#46a9dd" />
      </Task>
      <Task>
        <path d="m8 1 10.500 1-2 9-9-2z" fill="#b7c2d2" />
        <path d="m9.500 2.500 7.500.7-1.500 6.300-6.500-1.500z" fill="#1a2bd0" />
        <path d="m2 8 5-2 1 4 7 2-4 6-9-4z" fill="#8a94a1" />
        <path d="m2 12 10 3.500-1 2L2 14z" fill="#d5dae0" />
      </Task>
      <Task>
        <path d="m1.500 10 7.500-5 9.500 1.500v3L11 15l-9.500-2z" fill="#d9bd5e" />
        <path d="m1.500 10 7.500-5 9.500 1.500L11 12z" fill="#f5e6a3" />
        <path d="m9 8 4 1" stroke="#99802f" strokeWidth="1.200" />
      </Task>
      <Task>
        <path d="M1 1h9v15.500H1z" fill="#38a1dc" />
        <path d="M2.500 4h6M2.500 6.500h6" stroke="#bfe3f7" />
        <path d="M5 12h13.500v6.500H5z" fill="#8fa5b5" />
        <path d="M9 12v-2h5v2" stroke="#8fa5b5" strokeWidth="1.500" />
      </Task>
      <Task>
        <path d="M4.500 3H19l-3 14H1z" fill="#3568c4" />
        <path d="m6.500 6 5 4-6.500 4M10.500 14h4" stroke="#fff" strokeWidth="1.700" />
      </Task>
    </div>
    <div className="ml-auto flex items-center">
      <svg viewBox="0 0 10 6" className="h-1.5 w-2.5">
        <path d="m.7 5.300L5 1l4.300 4.300" fill="none" stroke="#ddd" strokeWidth="1.200" />
      </svg>
      <svg viewBox="0 0 14 12" className="ml-[6px] h-3 w-3.5" fill="none" stroke="#ddd">
        <path d="M3.500 2h9.500v6.500H4.500M8.500 8.500v2.500M5.500 11h6M2.500 2v6M.5 2.500h4M1 5h3" strokeWidth="1.100" />
      </svg>
      <svg viewBox="0 0 13 12" className="ml-[4px] mt-0.5 h-3 w-[13px]">
        <path d="M.5 4h2L6 1v9L2.500 7.500h-2z" fill="none" stroke="#ddd" />
        <circle cx="9.500" cy="8" r="3.200" fill="#d92f3c" />
        <path d="m8.300 6.800 2.400 2.400m0-2.400L8.300 9.200" stroke="#fff" strokeWidth=".8" />
      </svg>
      <div className="ml-[5px] flex w-[45px] flex-col items-center text-[8.5px] leading-[13px] tracking-[-0.25px] whitespace-nowrap text-[#e4e4e4]">
        <span>7:30 PM</span>
        <span>12/10/2022</span>
      </div>
      <svg viewBox="0 0 20 20" className="ml-[9px] h-5 w-5">
        <path d="M1.500 2.500H14V12H8.500L6 14.500V12H1.500z" fill="#f0f0f0" />
        <path d="M3.500 5.500H12M3.500 8.500H12" stroke="#333" />
        <circle cx="13" cy="13.500" r="5.500" fill="#3a3a3c" stroke="#777" strokeWidth=".7" />
        <text x="13" y="16.500" textAnchor="middle" fontSize="8.500" fill="#fff">1</text>
      </svg>
      <span className="ml-[7px] h-[25px] w-1 border-l border-[#555]" />
    </div>
  </div>
);

export default function App() {
  return (
    <div className="relative h-[894px] w-[1430px] overflow-hidden bg-[#eeeeee]">
      <Browser />
      <div className="h-[640px] border-2 border-[#2475c8] font-['Open_Sans',sans-serif] text-[8.5px] leading-[12px] whitespace-nowrap text-[#2a2a2a]">
        <DirectoryWindow />
        <Taskbar />
      </div>
      <div className="font-['Open_Sans',sans-serif] text-[8.5px] leading-[12px] whitespace-nowrap text-[#2a2a2a]">
        <ManagementWindow />
        <PropertiesDialog />
      </div>
      <ViewerBar />
      <div className="absolute top-[867px] left-[1426px] h-10 w-10 rounded-lg bg-[#6b6b6b] shadow-[0_0_22px_rgba(0,0,0,0.35)]" />
    </div>
  );
}
